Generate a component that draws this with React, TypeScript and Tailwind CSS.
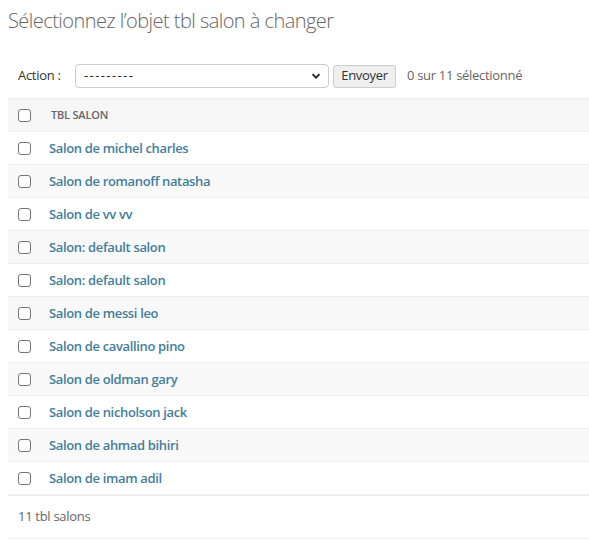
const salons = [
  "Salon de michel charles",
  "Salon de romanoff natasha",
  "Salon de vv vv",
  "Salon: default salon",
  "Salon: default salon",
  "Salon de messi leo",
  "Salon de cavallino pino",
  "Salon de oldman gary",
  "Salon de nicholson jack",
  "Salon de ahmad bihiri",
  "Salon de imam adil",
];

function Box() {
  return <span className="block w-[13px] h-[13px] rounded-[3px] border border-[#767676] bg-white" />;
}

export default function App() {
  return (
    <div className="w-[589px] h-[552px] bg-white overflow-hidden font-['Open_Sans',sans-serif] text-[#333]">
      <h1 className="pl-[8px] pt-[8px] text-[20px] leading-[26px] font-light text-[#666] tracking-[-0.55px]">
        Sélectionnez l’objet tbl salon à changer
      </h1>

      <div className="ml-[8px] mt-[25px] flex items-center h-[34px] pl-[10px] text-[13px] tracking-[-0.3px]">
        <span className="w-[57px] text-[#333]">Action :</span>
        <div className="flex items-center justify-between w-[254px] h-[24px] border border-[#ccc] rounded-[4px] pl-[8px] pr-[7px] bg-white">
          <span className="text-[#222] tracking-[1.4px]">---------</span>
          <svg width="10" height="10" viewBox="0 0 10 10">
            <path d="M1.5 3.2 L5 6.7 L8.5 3.2" fill="none" stroke="#222" strokeWidth="1.8" />
          </svg>
        </div>
        <div className="ml-[4px] w-[63px] h-[23px] flex items-center justify-center border border-[#ccc] rounded-[3px] bg-[#efefef] text-[#333]">
          Envoyer
        </div>
        <span className="ml-[11px] text-[#666]">0 sur 11 sélectionné</span>
      </div>

      <div className="ml-[8px] mt-[5px] border-t border-[#eee]">
        <div className="flex items-center h-[33px] bg-[#f6f6f6] border-b border-[#eee] pl-[10px]">
          <Box />
          <span className="ml-[20px] text-[11px] font-semibold text-[#666] uppercase tracking-[-0.2px]">tbl salon</span>
        </div>
        {salons.map((s, i) => (
          <div
            key={i}
            className={`flex items-center h-[33px] border-b border-[#eee] pl-[10px] ${i % 2 === 1 ? "bg-[#f9f9f9]" : "bg-white"}`}
          >
            <Box />
            <a className="ml-[18px] pt-[1px] text-[13px] font-semibold text-[#447e9b] tracking-[-0.35px]">{s}</a>
          </div>
        ))}
        <div className="border-t border-[#eee]" />
        <div className="h-[43px] flex items-center pl-[10px] text-[13px] text-[#666] border-b border-[#eee] tracking-[-0.3px]">
          11 tbl salons
        </div>
      </div>
    </div>
  );
}
